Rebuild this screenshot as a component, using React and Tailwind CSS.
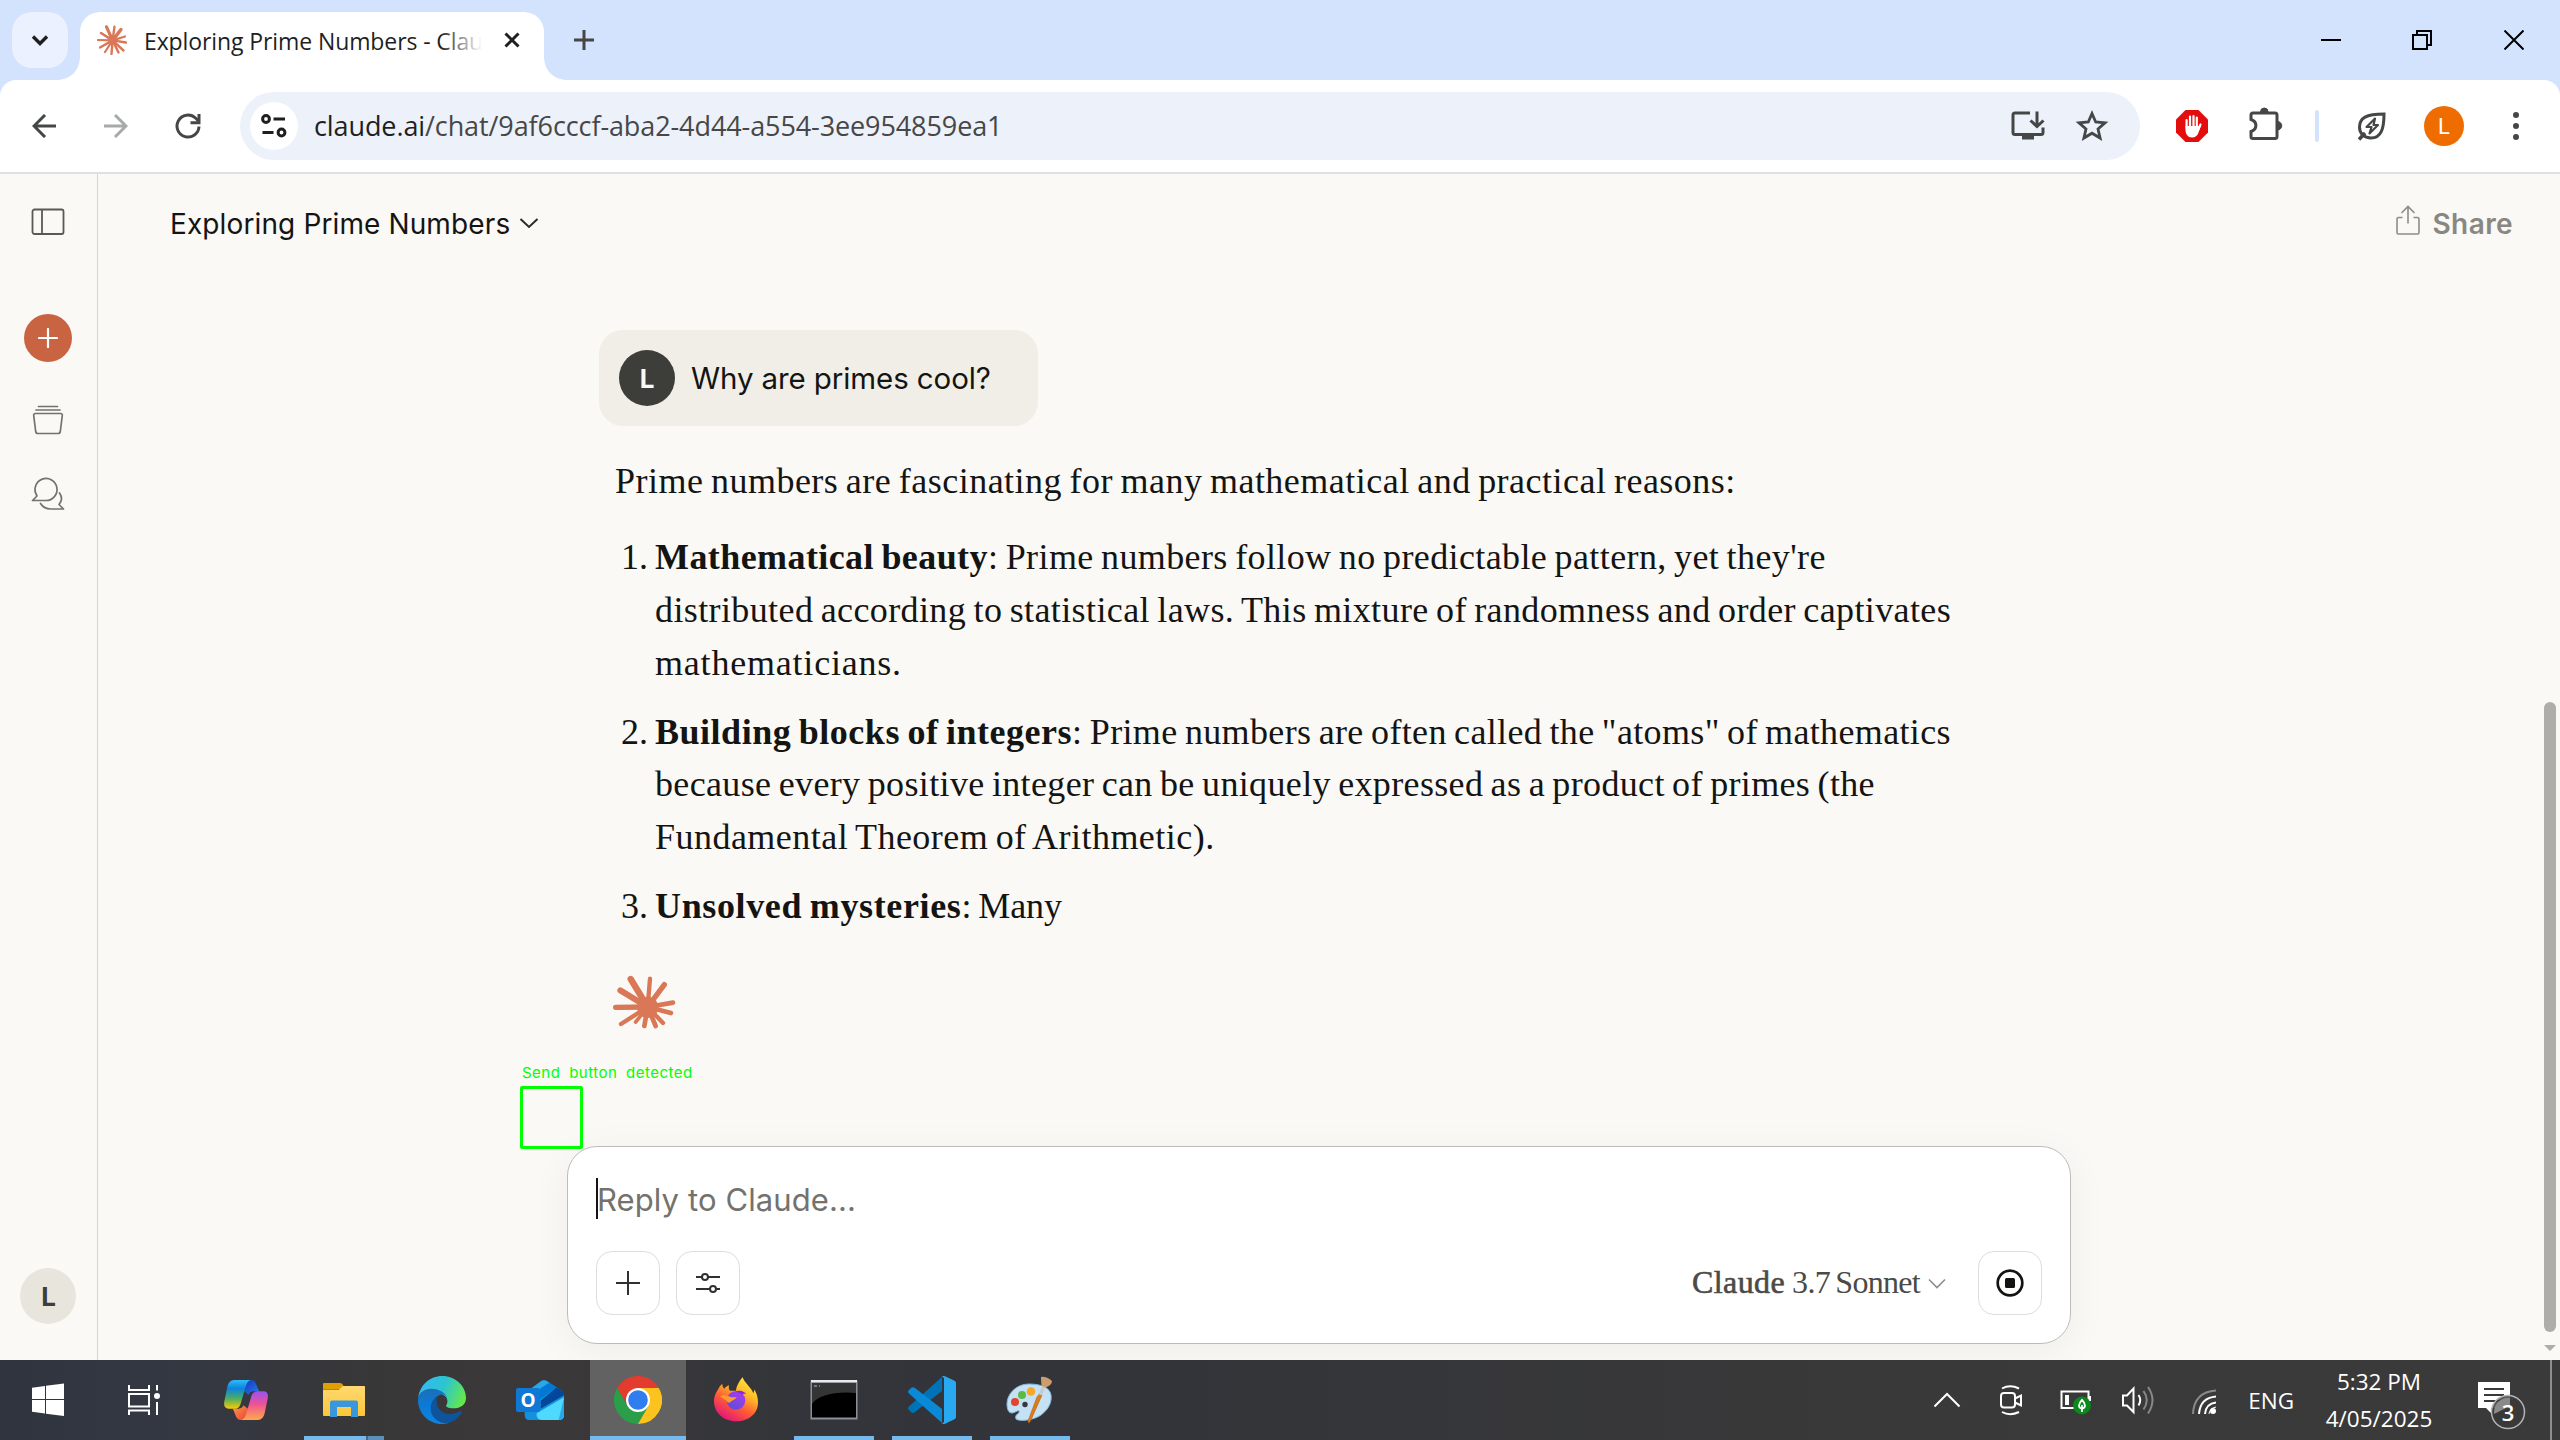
import React from "react";

const sans = "font-['Open_Sans','Noto_Sans',sans-serif]";
const ui = "font-['Inter','Liberation_Sans',sans-serif]";
const serif = "font-['Liberation_Serif',serif]";

/* ---------- shared icons ---------- */

function Svg({ w, h, box, className = "", children }) {
  return (
    <svg width={w} height={h} viewBox={box || `0 0 ${w} ${h}`} fill="none" className={`block shrink-0 ${className}`}>
      {children}
    </svg>
  );
}

const smallRays = [
  [1, 15, 2.2], [4, 8, 2.6], [9.5, 1.8, 3.2], [17.5, 1.6, 2.4], [24, 4.5, 3.4], [28, 11.5, 2.2],
  [29, 17.5, 2.4], [26.5, 25.5, 2.4], [21.5, 27.5, 2.4], [14.5, 29, 2.4], [8, 27, 2.2], [3, 22.5, 2.4],
];

function Favicon() {
  return (
    <Svg w={30} h={30}>
      {smallRays.map(([x, y, s]) => (
        <line key={`${x}-${y}`} x1="15.6" y1="15.4" x2={x} y2={y} stroke="#d97757" strokeWidth={s} strokeLinecap="round" />
      ))}
      <circle cx="15.6" cy="15.4" r="4.2" fill="#d97757" />
    </Svg>
  );
}

const bigRays = [
  [62, 18, 19], [120, 17, 13], [163, 35, 16], [189, 89, 14], [183, 120, 14], [159, 150, 13],
  [137, 159, 14], [103, 159, 14], [77, 147, 11], [33, 153, 13], [17, 103, 16], [31, 52, 18],
];

function Sunburst() {
  return (
    <Svg w={66} h={58} box="0 0 198 174">
      {bigRays.map(([x, y, s]) => (
        <line key={`${x}-${y}`} x1="113" y1="102" x2={x} y2={y} stroke="#d97757" strokeWidth={s} strokeLinecap="round" />
      ))}
      <circle cx="113" cy="103" r="32" fill="#d97757" />
    </Svg>
  );
}

/* ---------- browser chrome ---------- */

function TabStrip() {
  return (
    <div className="flex h-20 items-start bg-[#d3e3fd]">
      <div className="ml-3 mt-3 flex h-14 w-14 items-center justify-center rounded-[20px] bg-[#ebf1fe]">
        <Svg w={20} h={14}>
          <path d="M3 3.5 10 10.5 17 3.5" stroke="#1f1f1f" strokeWidth="3.4" />
        </Svg>
      </div>
      <Svg w={24} h={80} className="-ml-3">
        <path d="M0 80C15 80 24 70 24 56V80Z" fill="#fff" />
      </Svg>
      <div className="mt-3 flex h-[68px] w-[464px] items-start rounded-t-[20px] bg-white">
        <div className="flex h-14 w-full items-center">
          <div className="ml-[17px]"><Favicon /></div>
          <div className={`relative ml-[17px] mt-0.5 h-9 w-[350px] whitespace-nowrap text-[23px] leading-9 tracking-[-0.1px] text-[#1f1f1f] ${sans}`}>
            Exploring Prime Numbers - Clau
            <div className="absolute right-0 top-0 h-9 w-[54px] bg-[linear-gradient(90deg,rgba(255,255,255,0)_0px,#fff_42px)]" />
          </div>
          <Svg w={16} h={16} className="ml-2.5">
            <path d="M1.5 1.5 14.5 14.5M14.5 1.5 1.5 14.5" stroke="#1f1f1f" strokeWidth="3" />
          </Svg>
        </div>
      </div>
      <Svg w={24} h={80}>
        <path d="M24 80C9 80 0 70 0 56V80Z" fill="#fff" />
      </Svg>
      <Svg w={20} h={20} className="ml-1.5 mt-[30px]">
        <path d="M10 0V20M0 10H20" stroke="#444746" strokeWidth="3" />
      </Svg>
      <div className="ml-auto mr-9 mt-[30px] flex">
        <Svg w={20} h={20}>
          <path d="M0 10H20" stroke="#000" strokeWidth="2" />
        </Svg>
        <Svg w={20} h={20} className="ml-[71px]">
          <path d="M1 5H15V19H1ZM5 5V1H19V15H15" stroke="#000" strokeWidth="2" />
        </Svg>
        <Svg w={20} h={20} className="ml-[72px]">
          <path d="M.5.5 19.5 19.5M19.5.5.5 19.5" stroke="#000" strokeWidth="2" />
        </Svg>
      </div>
    </div>
  );
}

function Toolbar() {
  return (
    <div className="bg-[#d3e3fd]">
      <div className="flex h-[92px] items-center rounded-t-[16px] bg-white">
        <Svg w={24} h={24} className="ml-8">
          <path d="M24 12H2M13 1 2 12 13 23" stroke="#444746" strokeWidth="3" />
        </Svg>
        <Svg w={24} h={24} className="ml-12">
          <path d="M0 12H22M11 1 22 12 11 23" stroke="#a8a9a9" strokeWidth="3" />
        </Svg>
        <Svg w={26} h={26} className="ml-[47px]">
          <path d="M24 13.5A11 11 0 1 1 20.5 5L24 8.5" stroke="#444746" strokeWidth="3" />
          <path d="M24 1V9.7H15.5" stroke="#444746" strokeWidth="3" />
        </Svg>
        <div className="ml-[39px] flex h-[68px] w-[1900px] items-center rounded-full bg-[#ecf1fa]">
          <div className="ml-2.5 flex h-12 w-12 items-center justify-center rounded-full bg-white">
            <Svg w={26} h={24}>
              <g stroke="#1f1f1f" strokeWidth="3">
                <circle cx="5" cy="5" r="3.4" />
                <path d="M12.5 5H24M1.5 18.5H12.5" />
                <circle cx="20.5" cy="18.5" r="3.4" />
              </g>
            </Svg>
          </div>
          <div className={`ml-4 whitespace-nowrap text-[27px] leading-10 tracking-[-0.1px] text-[#474747] ${sans}`}>
            <span className="text-[#1f1f1f]">claude.ai</span>/chat/9af6cccf-aba2-4d44-a554-3ee954859ea1
          </div>
          <Svg w={34} h={30} className="ml-auto">
            <path d="M19 2H4Q2 2 2 4V21.500Q2 23.500 4 23.500H30Q32 23.500 32 21.500V16.500M26 0.500V15M19.500 9.500 26 15.500 32.500 9.500" stroke="#444746" strokeWidth="3" />
            <path d="M11 24H23V28.500H11Z" fill="#444746" />
          </Svg>
          <Svg w={34} h={32} className="mb-0.5 ml-[30px] mr-[31px]">
            <path d="M17 4.500 20.700 13 30 13.800 23 20 25.100 29 17 24.200 8.900 29 11 20 4 13.800 13.300 13Z" stroke="#444746" strokeWidth="2.800" />
          </Svg>
        </div>
        <Svg w={32} h={32} className="ml-9">
          <path d="M9.500 0H22.500L32 9.500V22.500L22.500 32H9.500L0 22.500V9.500Z" fill="#e40d0d" />
          <path d="M10.600 10V18M14 6.500V16M17.500 6V16M20.800 7.500V17M24.500 14.500 22 20" stroke="#fff" strokeWidth="2.200" strokeLinecap="round" />
          <path d="M9.500 16H22L25 15.500 22.500 22.500C21.500 26 19 27.500 16 27.500C12 27.500 9.500 24 9.500 20Z" fill="#fff" />
        </Svg>
        <Svg w={34} h={34} className="mb-1 ml-[41px]">
          <path d="M4 6H26Q28 6 28 8V29.500Q28 31.500 26 31.500H4Q2 31.500 2 29.500V24.500C8.500 22.500 8.500 14.500 2 12.500V8Q2 6 4 6Z" stroke="#444746" strokeWidth="3" />
          <path d="M11.500 5A3.800 4 0 0 1 19.100 5ZM28.500 14.500A4 4 0 0 1 28.500 23Z" fill="#444746" stroke="#444746" />
        </Svg>
        <div className="ml-8 h-8 w-1 rounded-full bg-[#d3e3fd]" />
        <Svg w={30} h={30} className="ml-[38px]">
          <path d="M27 3C27 18 24 27 14 27C7 27 2.500 22.500 2.500 16C2.500 7 9 3 27 3Z" stroke="#444746" strokeWidth="3" />
          <path d="M8 22 2 28.500" stroke="#444746" strokeWidth="3.400" />
          <path d="M18 7.500 9.500 16H14.500L12.500 22.500 21 14H16.500Z" stroke="#444746" strokeWidth="2.200" strokeLinejoin="round" />
        </Svg>
        <div className={`ml-[37px] flex h-10 w-10 items-center justify-center rounded-full bg-[#ef6c00] text-[22px] text-white font-['Roboto',sans-serif]`}>L</div>
        <Svg w={6} h={28} className="ml-[49px]">
          <circle cx="3" cy="3" r="3" fill="#444746" />
          <circle cx="3" cy="14" r="3" fill="#444746" />
          <circle cx="3" cy="25" r="3" fill="#444746" />
        </Svg>
      </div>
      <div className="h-0.5 bg-[#dfe0e0]" />
    </div>
  );
}

/* ---------- page ---------- */

function Sidebar() {
  return (
    <div className="flex w-[98px] flex-col items-center border-r border-[#d6d5d1] pr-px">
      <Svg w={34} h={28} className="mt-[34px]">
        <rect x="1.500" y="1.500" width="31" height="24.500" rx="2" stroke="#5a5955" strokeWidth="1.800" />
        <path d="M11 1.500V26" stroke="#5a5955" strokeWidth="1.800" />
      </Svg>
      <div className="mt-[78px] flex h-12 w-12 items-center justify-center rounded-full bg-[#c96442]">
        <Svg w={20} h={20}>
          <path d="M10 1V19M1 10H19" stroke="#fff" strokeWidth="2.200" strokeLinecap="round" />
        </Svg>
      </div>
      <Svg w={32} h={32} className="mt-[42px]">
        <g stroke="#73726c" strokeWidth="1.700" strokeLinecap="round">
          <path d="M6.500 2.500H25.500M4 6H28" />
          <path d="M3.500 9.500H28.500Q30.500 9.500 30.300 11.500L28.300 27.500Q28 29.500 26 29.500H6Q4 29.500 3.700 27.500L1.700 11.500Q1.500 9.500 3.500 9.500Z" />
        </g>
      </Svg>
      <Svg w={34} h={34} className="mt-10">
        <g stroke="#73726c" strokeWidth="1.700" strokeLinejoin="round" strokeLinecap="round">
          <path d="M5.500 19A11 11 0 1 1 15 24.500H1.500L6 20Z" />
          <path d="M9.500 27.500C12 31.500 15 33 20 33H32.500L28 28.500C31 25 31 20.500 28.500 17" />
        </g>
      </Svg>
      <div className={`mb-9 mt-auto flex h-14 w-14 items-center justify-center rounded-full bg-[#e8e6dc] text-[26px] font-bold text-[#3d3d3a] ${ui}`}>
        <span className="pl-px">L</span>
      </div>
    </div>
  );
}

function Header() {
  return (
    <div className={`flex h-24 items-center pt-px text-[28px] leading-10 ${ui}`}>
      <div className="ml-[72px] pt-0.5 tracking-[0.12px] text-[#141413]">Exploring Prime Numbers</div>
      <Svg w={20} h={14} className="ml-[9px]">
        <path d="M1.500 3 10 11 18.500 3" stroke="#2a2a28" strokeWidth="2" />
      </Svg>
      <Svg w={26} h={32} className="mb-1 ml-auto">
        <path d="M7.500 12.500H3.500Q2 12.500 2 14V27.500Q2 29 3.500 29H22.500Q24 29 24 27.500V14Q24 12.500 22.500 12.500H18.500M13 18.500V2M6.500 8 13 1.500 19.500 8" stroke="#8e8d8a" strokeWidth="1.600" />
      </Svg>
      <div className="ml-3 mr-[47px] pt-0.5 font-semibold tracking-[0.4px] text-[#888783]">Share</div>
    </div>
  );
}

function Item({ n, children }) {
  return (
    <li className="flex">
      <span className="w-10 shrink-0 pr-[7px] text-right">{n}.</span>
      <div className="flex flex-col">{children}</div>
    </li>
  );
}

function Conversation() {
  return (
    <div className="ml-[501px] mt-[60px] flex flex-col items-start">
      <div className={`flex h-24 w-[439px] items-center rounded-[24px] bg-[#f0eee6] ${ui}`}>
        <div className="ml-5 flex h-14 w-14 items-center justify-center rounded-full bg-[#3d3d3a] text-[26px] font-bold text-[#faf9f5]">L</div>
        <div className="ml-4 text-[29.5px] leading-10 tracking-[-0.1px] text-[#141413]">Why are primes cool?</div>
      </div>
      <div className={`ml-4 mt-[28.5px] whitespace-nowrap text-[36px] leading-[52.8px] text-[#141413] [word-spacing:-2px] ${serif}`}>
        <p className="tracking-[0.490px]">Prime numbers are fascinating for many mathematical and practical reasons:</p>
        <ol className="mt-[24px] flex flex-col gap-4">
          <Item n={1}>
            <span className="tracking-[0.390px]"><b className="tracking-[0.420px]">Mathematical beauty</b>: Prime numbers follow no predictable pattern, yet they're</span>
            <span className="tracking-[0.390px]">distributed according to statistical laws. This mixture of randomness and order captivates</span>
            <span className="tracking-[0.800px]">mathematicians.</span>
          </Item>
          <Item n={2}>
            <span className="tracking-[0.350px]"><b className="tracking-[0.520px]">Building blocks of integers</b>: Prime numbers are often called the "atoms" of mathematics</span>
            <span className="tracking-[0.350px]">because every positive integer can be uniquely expressed as a product of primes (the</span>
            <span className="tracking-[0.470px]">Fundamental Theorem of Arithmetic).</span>
          </Item>
          <Item n={3}>
            <span className="tracking-[-0.100px]"><b className="tracking-[0.640px]">Unsolved mysteries</b>: Many</span>
          </Item>
        </ol>
      </div>
      <div className="ml-[11px] mt-10"><Sunburst /></div>
    </div>
  );
}

function Composer() {
  return (
    <div className="ml-[469px] mt-auto mb-4 flex h-[198px] w-[1504px] shrink-0 flex-col rounded-[30px] border border-[#bdbcb9] bg-white shadow-[0_8px_40px_rgba(0,0,0,0.05)]">
      <div className="ml-7 mt-[31px] flex h-[41px] items-center">
        <div className="h-[41px] w-0.5 bg-[#141413]" />
        <div className={`-ml-px pt-0.5 text-[31px] leading-[41px] tracking-[0.1px] text-[#73726c] ${ui}`}>Reply to Claude...</div>
      </div>
      <div className="mx-7 mt-8 flex items-center">
        <div className="flex h-16 w-16 items-center justify-center rounded-2xl border border-[#dedddb]">
          <Svg w={24} h={24}>
            <path d="M12 0V24M0 12H24" stroke="#30302e" strokeWidth="2" />
          </Svg>
        </div>
        <div className="ml-4 flex h-16 w-16 items-center justify-center rounded-2xl border border-[#dedddb]">
          <Svg w={24} h={20}>
            <g stroke="#30302e" strokeWidth="2">
              <path d="M0 4H6M12 4H24M0 16H14M20 16H24" />
              <circle cx="9" cy="4" r="3" />
              <circle cx="17" cy="16" r="3" />
            </g>
          </Svg>
        </div>
        <div className={`ml-auto flex items-center text-[32px] leading-10 text-[#4a4a47] ${serif}`}>
          <span className="-mt-0.5 tracking-[0.400px] [-webkit-text-stroke:0.600px_#4a4a47]">Claude</span>
          <span className="-mt-0.5 ml-[7px] tracking-[-0.700px] [word-spacing:-2px]">3.7 Sonnet</span>
          <Svg w={18} h={12} className="ml-2 mt-0.5">
            <path d="M1 1.500 9 9.500 17 1.500" stroke="#8e8d8a" strokeWidth="1.600" />
          </Svg>
        </div>
        <div className="ml-8 flex h-16 w-16 items-center justify-center rounded-2xl border border-[#dedddb]">
          <Svg w={28} h={28}>
            <circle cx="14" cy="14" r="12.300" stroke="#141413" strokeWidth="2.700" />
            <rect x="9" y="9" width="10" height="10" rx="1.500" fill="#141413" />
          </Svg>
        </div>
      </div>
    </div>
  );
}

function Detection() {
  return (
    <div className="pointer-events-none absolute left-[520px] top-[888px]">
      <div className={`ml-0.5 h-6 whitespace-nowrap text-[15px] font-normal leading-[22px] tracking-[0.500px] text-[#00ff00] [word-spacing:4px] ${ui}`}>Send button detected</div>
      <div className="h-[63px] w-[63px] rounded-[2px] border-[3px] border-[#00ff00]" />
    </div>
  );
}

function Page() {
  return (
    <div className="relative flex h-[1186px] overflow-hidden bg-[#faf9f5]">
      <Sidebar />
      <div className="flex flex-1 flex-col">
        <Header />
        <Conversation />
        <Composer />
      </div>
      <div className="absolute right-1 top-[528px] h-[630px] w-3 rounded-full bg-[#aeada9]" />
      <Svg w={12} h={6} className="absolute right-1 top-[1171px]">
        <path d="M0 0H12L6 6Z" fill="#aeada9" />
      </Svg>
      <Detection />
    </div>
  );
}

/* ---------- taskbar icons ---------- */

function WindowsIcon() {
  return (
    <Svg w={32} h={34}>
      <path d="M0 4.800 13 3V16H0ZM14 2.800 32 .500V16H14ZM0 17H13V30.500L0 28.700ZM14 17H32V33L14 30.700Z" fill="#fff" />
    </Svg>
  );
}

function TaskViewIcon() {
  return (
    <Svg w={32} h={30}>
      <path d="M1 0V5H21V0M1 9H21V21.500H1ZM1 30V25.500H21V30M29 0V5.500M29 17V30" stroke="#fff" strokeWidth="2" />
      <circle cx="29" cy="11" r="3" fill="#fff" />
    </Svg>
  );
}

function CopilotIcon() {
  return (
    <Svg w={44} h={40} box="0 0 132 120">
      <defs>
        <linearGradient id="cpA" x1="0" y1="0" x2="0" y2="1">
          <stop offset="0" stopColor="#2fbcf7" /><stop offset=".3" stopColor="#0a84dd" /><stop offset=".65" stopColor="#4fae60" /><stop offset="1" stopColor="#fccb00" />
        </linearGradient>
        <linearGradient id="cpB" x1="0" y1="0" x2="0" y2="1">
          <stop offset="0" stopColor="#9a50f2" /><stop offset=".45" stopColor="#ef5394" /><stop offset="1" stopColor="#ffa94a" />
        </linearGradient>
        <linearGradient id="cpC" x1="0" y1="0" x2="1" y2="1">
          <stop offset="0" stopColor="#1238b8" /><stop offset="1" stopColor="#2b7bf0" />
        </linearGradient>
        <linearGradient id="cpD" x1="0" y1="0" x2="1" y2="1">
          <stop offset="0" stopColor="#ff9a45" /><stop offset="1" stopColor="#e8403a" />
        </linearGradient>
      </defs>
      <path d="M66 0H82C97 0 97 20 106 34H88Q78 34 74 44L60 34Z" fill="url(#cpC)" />
      <path d="M66 120H50C35 120 35 100 26 86H44Q54 86 58 76L72 86Z" fill="url(#cpD)" />
      <path d="M30 0H80Q70 2 65 20L49 74Q44 86 34 86H14Q-3 86 1 64L10 20Q15 0 30 0Z" fill="url(#cpA)" />
      <path d="M102 120H52Q62 118 67 100L83 46Q88 34 98 34H118Q135 34 131 56L122 100Q117 120 102 120Z" fill="url(#cpB)" />
    </Svg>
  );
}

function ExplorerIcon() {
  return (
    <Svg w={42} h={36}>
      <defs>
        <linearGradient id="fx" x1="0" y1="0" x2="0" y2="1">
          <stop offset="0" stopColor="#ffd972" /><stop offset="1" stopColor="#fcc638" />
        </linearGradient>
      </defs>
      <path d="M0 2Q0 1 1 1H17Q19 1 20 3L22 7H0Z" fill="#dfa000" />
      <path d="M0 7.500H16L20 4H41Q42 4 42 5V33Q42 34 41 34H1Q0 34 0 33Z" fill="url(#fx)" />
      <path d="M7 35V20.500Q7 18.500 9 18.500H33Q35 18.500 35 20.500V35H28V25H14V35Z" fill="#3a97dc" />
    </Svg>
  );
}

function EdgeIcon() {
  return (
    <Svg w={48} h={48} box="0 0 144 144">
      <defs>
        <linearGradient id="egA" x1="0" y1=".3" x2="1" y2=".6">
          <stop offset="0" stopColor="#35b8f3" /><stop offset=".5" stopColor="#2cc5cf" /><stop offset="1" stopColor="#66e84c" />
        </linearGradient>
        <linearGradient id="egB" x1="0" y1="0" x2="0" y2="1">
          <stop offset="0" stopColor="#1b6fb8" /><stop offset=".5" stopColor="#0a7bd8" /><stop offset="1" stopColor="#0b84e0" />
        </linearGradient>
      </defs>
      <path d="M1 64C6 26 36 0 72 0C114 0 144 32 144 66C144 86 128 97 106 97C90 97 82 92 85 87C92 78 88 60 74 56C50 36 14 34 1 64Z" fill="url(#egA)" />
      <path d="M0 72C0 50 20 38 40 38C64 38 86 52 88 68C84 56 74 54 66 57C50 62 38 80 40 100C42 124 60 138 92 141C84 143 78 144 72 144C32 144 0 112 0 72Z" fill="url(#egB)" />
      <path d="M57 62C52 82 62 113 96 114C112 115 122 106 130 105C134 106 130 114 124 120C110 136 94 143 82 142C54 138 38 118 38 98C38 82 46 68 57 62Z" fill="#10539d" />
    </Svg>
  );
}

function OutlookIcon() {
  return (
    <div className={`relative flex ${sans}`}>
      <Svg w={48} h={40} box="0 0 144 120">
        <path d="M26 44 76 3Q84-2 92 3L138 32 144 44V104Q144 120 128 120H40Q26 120 26 104Z" fill="#1490df" />
        <path d="M30 36 76 3Q84-2 92 3L100 8 46 44Z" fill="#28a8ea" />
        <path d="M100 8 122 22 72 58V26Z" fill="#0078d4" />
        <path d="M122 22 138 32Q144 37 144 46L74 86V62Z" fill="#03479c" />
        <path d="M144 52V104Q144 120 128 120H76Q60 118 62 100Z" fill="#50d9ff" />
        <path d="M144 52V104Q144 120 128 120Z" fill="#28a8ea" />
      </Svg>
      <div className="absolute left-0 top-2 flex h-6 w-6 items-center justify-center rounded-[2px] bg-[#0f78d4] text-[19px] font-bold leading-6 text-white">O</div>
    </div>
  );
}

function ChromeIcon() {
  return (
    <Svg w={48} h={48} box="0 0 144 144">
      <path d="M72 36H134.400A72 72 0 0 0 9.600 36L40.800 90Z" fill="#e33b2e" />
      <path d="M9.600 36A72 72 0 0 0 72 144L103.200 90H40.800Z" fill="#2b9e49" />
      <path d="M134.400 36A72 72 0 0 1 72 144L103.200 90 72 36Z" fill="#fcc31e" />
      <circle cx="72" cy="72" r="36" fill="#fff" />
      <circle cx="72" cy="72" r="29.500" fill="#2f7def" />
    </Svg>
  );
}

function FirefoxIcon() {
  return (
    <Svg w={44} h={48} box="0 0 132 144">
      <defs>
        <linearGradient id="ffA" x1=".9" y1="0" x2=".3" y2="1">
          <stop offset="0" stopColor="#fff04a" /><stop offset=".35" stopColor="#ffbd28" /><stop offset=".65" stopColor="#ff5a36" /><stop offset="1" stopColor="#e3157a" />
        </linearGradient>
        <linearGradient id="ffB" x1=".8" y1="0" x2=".2" y2="1">
          <stop offset="0" stopColor="#b138f0" /><stop offset="1" stopColor="#5a4fd6" />
        </linearGradient>
      </defs>
      <path d="M86 4C92 22 112 34 118 52C120 48 121 44 120 40C128 50 132 64 132 80C132 114 102 136 66 136C28 136 0 110 0 76C0 56 10 44 16 34C17 30 22 26 25 24C25 32 28 36 31 38C36 32 40 30 45 28C44 36 44 40 48 44H66C68 28 78 12 86 4Z" fill="url(#ffA)" />
      <circle cx="66" cy="73" r="28" fill="url(#ffB)" />
      <path d="M18 62C28 54 40 58 48 62C56 66 62 62 68 64C64 72 56 72 52 76C46 84 38 78 38 74C32 70 26 66 18 62Z" fill="#ff9a2b" />
      <path d="M64 46C78 40 96 48 96 54C90 52 88 54 86 56Z" fill="#8a2be0" />
    </Svg>
  );
}

function TerminalIcon() {
  return (
    <Svg w={48} h={40}>
      <rect x=".5" y=".5" width="47" height="39" fill="#8b9096" />
      <rect x="1" y="0" width="46" height="2.200" fill="#e8eaec" />
      <rect x="2" y="3" width="44" height="34.500" fill="#000" />
      <path d="M2 3H46V13C26 11 8 15 2 24Z" fill="#333537" />
      <path d="M4 6H7M9 6H10" stroke="#bbb" />
    </Svg>
  );
}

function CodeIcon() {
  return (
    <Svg w={48} h={48}>
      <path d="M34 1V15L7 36Q5 38 3 36L.5 33.500Q-.5 32 1 30.500Z" fill="#0072b8" />
      <path d="M34 47V33L7 12Q5 10.500 3 12L.5 14.500Q-.5 16 1 17.500Z" fill="#0a8ad6" />
      <path d="M34 .500Q35 -.500 37 .300L47 5Q48 6 48 7V41Q48 42 47 43L37 47.700Q35 48.500 34 47.500L36 46V2Z" fill="#2aa9f3" />
    </Svg>
  );
}

function PaintIcon() {
  return (
    <Svg w={48} h={48}>
      <path d="M23 8C10 8 1 18 1 28C1 34 3 37 6 37C9 37 11 34 13 35C15 37 8 38 10 43C14 46 28 44 35 39C43 33 46 26 45 19C44 12 36 8 23 8Z" fill="#c4e2f3" stroke="#84b8dc" />
      <circle cx="9" cy="26" r="4" fill="#e2442f" />
      <circle cx="16" cy="19" r="4" fill="#5cb946" />
      <circle cx="25" cy="15.500" r="4.300" fill="#f9a825" />
      <circle cx="19" cy="28.500" r="2.700" fill="#333842" />
      <path d="M33.500 18 36 19 24 46Q22 48 22 45L31 21Z" fill="#e07b1a" stroke="#b05a10" strokeWidth=".6" />
      <path d="M36 10 39.500 11 36 19.500 32.500 18Z" fill="#c6cbd0" />
      <path d="M35 1Q40 0 46 5Q46 9 39.500 11.500L35.500 9.500Q35 5 35 1Z" fill="#cb9c6c" />
    </Svg>
  );
}

function Slot({ width, active, bar, children }) {
  return (
    <div className={`${width} ${active ? "bg-[#626262]" : ""} flex h-20 shrink-0 flex-col items-center`}>
      <div className="flex h-[76px] items-center pt-1">{children}</div>
      {bar}
    </div>
  );
}

function Tray() {
  return (
    <div className={`ml-auto flex h-20 items-center text-white ${sans}`}>
      <Svg w={28} h={16}>
        <path d="M1.500 14.500 14 2 26.500 14.500" stroke="#fff" strokeWidth="2" />
      </Svg>
      <Svg w={24} h={32} className="ml-[38px]">
        <g stroke="#fff" strokeWidth="2">
          <rect x="2" y="9" width="14" height="14.500" rx="3" />
          <path d="M16 14.500 22 11.500V21.500L16 18.500M3 4.500Q11 0 20 4.500M3 28Q11 32.500 20 28" />
        </g>
      </Svg>
      <Svg w={32} h={26} className="ml-[37px] mt-1">
        <path d="M1.500 2.500H28.500V19H1.500Z" stroke="#fff" strokeWidth="2" />
        <path d="M5 6H9V16H5ZM29 7H31V12H29Z" fill="#fff" />
        <circle cx="22" cy="16.500" r="9" fill="#0a8a1c" />
        <path d="M22 11C18 15 18 19 22 19.500C26 19 26 15 22 11ZM22 16V23" stroke="#fff" strokeWidth="1.800" />
      </Svg>
      <Svg w={34} h={30} className="ml-[29px]">
        <path d="M2 10.500H6L12.500 3.500V27L6 20.500H2Z" stroke="#fff" strokeWidth="2" />
        <path d="M17.500 10Q21 15 17.500 20.500" stroke="#fff" strokeWidth="2" />
        <path d="M22.500 6Q29 15 22.500 24.500M27 2Q36 15 27 28.500" stroke="#8a8989" strokeWidth="2" />
      </Svg>
      <Svg w={25} h={26} className="ml-[37px] mt-1">
        <path d="M1 25Q2 3 24 1.500" stroke="#8a8989" strokeWidth="2" />
        <path d="M7 25Q8 9 24 7.500M13 25Q14 14.500 24 13.500" stroke="#fff" strokeWidth="2" />
        <circle cx="21" cy="22" r="3" fill="#fff" />
        <path d="M17 25Q17.500 19 24 18" stroke="#fff" />
      </Svg>
      <div className="ml-[31px] pt-0.5 text-[22.500px] leading-8">ENG</div>
      <div className="ml-[27px] mr-px flex w-[116px] flex-col items-center text-[22.500px] leading-[37px]">
        <span>5:32 PM</span>
        <span>4/05/2025</span>
      </div>
      <div className="relative ml-10 mt-3 flex">
        <Svg w={52} h={50}>
          <path d="M0 1H32V27H14V33L8 27H0Z" fill="#fff" />
          <path d="M6 8H26M6 14H26M6 20H26" stroke="#3a3a3a" strokeWidth="2" />
          <circle cx="30" cy="31" r="16.500" fill="#3a3a3a" fillOpacity=".85" stroke="#b4b4b4" strokeWidth="1.500" />
          <path d="M16 31A14 14 0 0 1 32 17V27H28L16 33Z" fill="#8a8a8a" />
        </Svg>
        <div className="absolute left-[22px] top-[19px] w-4 text-center text-[22px] font-semibold leading-6">3</div>
      </div>
      <div className="ml-5 h-20 w-0.5 bg-[#8f8e8e]" />
      <div className="w-2" />
    </div>
  );
}

function Taskbar() {
  const blue = "h-1 bg-[#76b9ed]";
  return (
    <div className="flex h-20 bg-[linear-gradient(90deg,#2f343e_0px,#333842_180px,#393737_400px,#3a3838_560px,#33353a_800px,#323439_1100px,#3a3939_1900px,#3a3a3a_2560px)]">
      <Slot width="w-24"><WindowsIcon /></Slot>
      <Slot width="w-24"><TaskViewIcon /></Slot>
      <Slot width="w-[108px]"><CopilotIcon /></Slot>
      <Slot
        width="w-[88px]"
        bar={<div className="flex w-20 shrink-0"><div className={`${blue} w-[62px]`} /><div className="h-1 w-0.5 bg-[#43698a]" /><div className="h-1 w-4 bg-[#5c90ba]" /></div>}
      >
        <ExplorerIcon />
      </Slot>
      <Slot width="w-[108px]"><EdgeIcon /></Slot>
      <Slot width="w-[94px]"><div className="ml-[-6px]"><OutlookIcon /></div></Slot>
      <Slot width="w-24" active bar={<div className={`${blue} w-full`} />}><ChromeIcon /></Slot>
      <Slot width="w-[100px]"><FirefoxIcon /></Slot>
      <Slot width="w-24" bar={<div className={`${blue} w-20`} />}><TerminalIcon /></Slot>
      <Slot width="w-[100px]" bar={<div className={`${blue} w-20`} />}><CodeIcon /></Slot>
      <Slot width="w-24" bar={<div className={`${blue} w-20`} />}><PaintIcon /></Slot>
      <Tray />
    </div>
  );
}

export default function App() {
  return (
    <div className="h-[1440px] w-[2560px] overflow-hidden">
      <TabStrip />
      <Toolbar />
      <Page />
      <Taskbar />
    </div>
  );
}
